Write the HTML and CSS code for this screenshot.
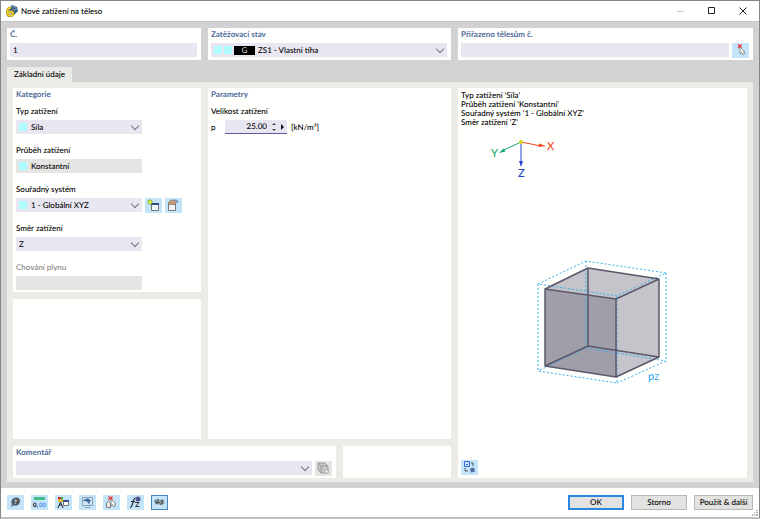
FILE: index.html
```html
<!DOCTYPE html>
<html lang="cs">
<head>
    <meta charset="UTF-8">
    <title>Nové zatížení na těleso</title>
    <link rel="stylesheet" href="styles.css">
</head>
<body>

<div class="window">
    <header class="titlebar">
        <svg class="app-icon" viewBox="0 0 12 12">
            <path d="M3 3 6 0 11 2 12 6 8 10 4 8z" fill="#3d5f86"/>
            <path d="M4 3 7 1 10 3M7 5 11 4" stroke="#7f9dbd" fill="none"/>
            <path d="M5 2.500C1.500 3 1 6 1.500 9C2.500 12 7 11 7 8.500C7 6 4 6 2 8" fill="none" stroke="#8d7a1e" stroke-width="2.600"/>
            <path d="M5 2.500C1.500 3 1 6 1.500 9C2.500 12 7 11 7 8.500C7 6 4 6 2 8" fill="none" stroke="#ecd02a" stroke-width="1.800"/>
        </svg>
        <h1>Nové zatížení na těleso</h1>
        <div class="window-buttons">
            <button aria-label="Minimalizovat" disabled><svg viewBox="0 0 8 8"><path d="M0 4.500H7" stroke="#ccc"/></svg></button>
            <button aria-label="Maximalizovat"><svg viewBox="0 0 8 8"><path d="M.5 .5H6.500V6.500H.5z" stroke="#222" fill="none"/></svg></button>
            <button aria-label="Zavřít"><svg viewBox="0 0 8 8"><path d="M.5 .5 7.500 7.500M7.500 .5 .5 7.500" stroke="#222"/></svg></button>
        </div>
    </header>

    <main>
        <div class="columns top">
            <section class="panel">
                <h2><label for="number">Č.</label></h2>
                <input type="text" id="number" class="field" value="1">
            </section>
            <section class="panel">
                <h2><label for="loadCase">Zatěžovací stav</label></h2>
                <div class="combo">
                    <span class="marks"><i class="swatch"></i><i class="swatch"></i><b class="badge">G</b></span>
                    <select id="loadCase" class="field with-badge"><option>ZS1 - Vlastní tíha</option></select>
                </div>
            </section>
            <section class="panel">
                <h2><label for="assigned">Přiřazeno tělesům č.</label></h2>
                <div class="line">
                    <input type="text" id="assigned" class="field">
                    <button class="tool" aria-label="Vybrat">
                        <svg viewBox="0 0 17 15"><path d="M6 1.500 9.500 5M9.500 1.500 6 5" stroke="#e33" stroke-width="1.300"/><path d="M8 4V11L9.500 9.500 11 12 12.500 11 11.500 9H13z" fill="#fff" stroke="#777" stroke-width=".8"/></svg>
                    </button>
                </div>
            </section>
        </div>

        <nav><button class="tab">Základní údaje</button></nav>

        <div class="columns page">
            <div class="left">
                <section class="panel category">
                    <h2>Kategorie</h2>
                    <label for="type">Typ zatížení</label>
                    <div class="combo short">
                        <span class="marks"><i class="swatch"></i></span>
                        <select id="type" class="field with-swatch"><option>Síla</option></select>
                    </div>
                    <label for="course">Průběh zatížení</label>
                    <div class="combo short">
                        <span class="marks"><i class="swatch"></i></span>
                        <input type="text" id="course" class="field with-swatch readonly" value="Konstantní" readonly>
                    </div>
                    <label for="system">Souřadný systém</label>
                    <div class="line system">
                        <div class="combo short">
                            <span class="marks"><i class="swatch"></i></span>
                            <select id="system" class="field with-swatch"><option>1 - Globální XYZ</option></select>
                        </div>
                        <button class="tool" aria-label="Nový souřadný systém">
                            <svg viewBox="0 0 17 15"><path d="M6.500 6.500H13.500V12.500H6.500z" fill="#eef5fb" stroke="#777"/><path d="M6 6H14" stroke="#334e7c" stroke-width="2"/><path d="M5 1V7M2 4H8M3 2 7 6M7 2 3 6" stroke="#8fae18"/><circle cx="5" cy="4" r="1.500" fill="#d5ef35"/></svg>
                        </button>
                        <button class="tool" aria-label="Upravit souřadný systém">
                            <svg viewBox="0 0 17 15"><path d="M3.500 5.500H10.500V12.500H3.500z" fill="#eef3f8" stroke="#777"/><path d="M3 5 6 2H10L12 4 9 7 7 6 5 7z" fill="#c59b7a" stroke="#7d6657" stroke-width=".6"/><path d="M10 2 13 4" stroke="#6b9bc9" stroke-width="2"/></svg>
                        </button>
                    </div>
                    <label for="direction">Směr zatížení</label>
                    <div class="combo short">
                        <select id="direction" class="field"><option>Z</option></select>
                    </div>
                    <label for="gas" class="muted">Chování plynu</label>
                    <div class="combo short">
                        <input type="text" id="gas" class="field readonly" disabled>
                    </div>
                </section>
                <section class="panel filler"></section>
            </div>

            <section class="panel params">
                <h2>Parametry</h2>
                <label for="magnitude">Velikost zatížení</label>
                <div class="line magnitude">
                    <span class="symbol">p</span>
                    <div class="spin">
                        <input type="text" id="magnitude" value="25.00">
                        <svg viewBox="0 0 20 12"><path d="M5 4 7 2 9 4zM5 8 7 10 9 8z" fill="#444"/><path d="M14 3 17 6 14 9z" fill="#111"/></svg>
                    </div>
                    <span>[kN/m³]</span>
                </div>
            </section>

            <section class="panel preview">
                <p>Typ zatížení 'Síla'<br>Průběh zatížení 'Konstantní'<br>Souřadný systém '1 - Globální XYZ'<br>Směr zatížení 'Z'</p>
                <svg class="scene" viewBox="0 0 200 260">
                    <g class="axes">
                        <path d="M34 14 54 18" stroke="#f04a1c"/>
                        <path d="M59 18 52 15.500 51.500 19z" fill="#f04a1c"/>
                        <path d="M34 14 17 22" stroke="#14a673"/>
                        <path d="M12 25 16.500 20.500 18.500 23.500z" fill="#14a673"/>
                        <path d="M34 14V34" stroke="#2444cc"/>
                        <path d="M34 39 32 33H36z" fill="#2444cc"/>
                        <circle cx="34" cy="14" r="2" fill="#ddd51a"/>
                        <text x="60" y="22" fill="#f04a1c">X</text>
                        <text x="4" y="29" fill="#14a673">Y</text>
                        <text x="31" y="49" fill="#2444cc">Z</text>
                    </g>
                    <path d="M58 161 101 140 172 151V229L129 249 58 238z" fill="#c5c4cb"/>
                    <path d="M58 161 129 171V249L58 238z" fill="#a09ea9"/>
                    <path class="load" d="M51 156 99 133 179 145 130 168zM51 156V243L130 255V168M179 145V233L130 255M99 133V220L51 243M99 220 179 233"/>
                    <path class="edge" d="M58 161 101 140 172 151 129 171zM58 161V238L129 249V171M172 151V229L129 249M101 140V218L58 238M101 218 172 229"/>
                    <text x="161" y="252" class="load-name">p<tspan class="sub">Z</tspan></text>
                </svg>
                <button class="tool" aria-label="Přepnout zobrazení">
                    <svg viewBox="0 0 17 15"><path d="M3.500 1.500H8.500V6.500H3.500z" fill="#cfe0ff" stroke="#3569dc"/><path d="M5 4.500H7" stroke="#3569dc"/><path d="M9 8.500 13 7.500 14 11.500 10 12.500z" fill="#496c9c"/><path d="M10 3H12V6M4 8V11H7" stroke="#555" fill="none"/></svg>
                </button>
            </section>

            <div class="comment-row">
                <section class="panel comment">
                    <h2><label for="comment">Komentář</label></h2>
                    <div class="line">
                        <div class="combo"><select id="comment" class="field"><option></option></select></div>
                        <button class="tool off" aria-label="Knihovna komentářů" disabled>
                            <svg viewBox="0 0 17 15"><path d="M3 2H10L13 5V12H6L3 9z" fill="#c7c7c7" stroke="#999"/><path d="M6 5H13M6 5V12M3 2 6 5" stroke="#999" fill="none"/><path d="M10 9H13V12H10z" fill="#eee" stroke="#999" stroke-width=".5"/></svg>
                        </button>
                    </div>
                </section>
                <section class="panel spare"></section>
            </div>
        </div>
    </main>

    <footer>
        <div class="tools">
            <button class="tool" aria-label="Nápověda"><svg viewBox="0 0 17 15"><path d="M4 12 5 9C3 6 6 2.500 9 2.500C13 2.500 14 6 12 9C10 11 8 11 7 10z" fill="#505963"/><text x="7" y="9" class="glyph light">?</text></svg></button>
            <button class="tool" aria-label="Jednotky"><svg viewBox="0 0 17 15"><path d="M3 2H14V5H3z" fill="#43bd83"/><text x="2" y="12" class="glyph">0,</text><text x="8" y="12" class="glyph blue">00</text></svg></button>
            <button class="tool" aria-label="Zobrazení"><svg viewBox="0 0 17 15"><path d="M3 2H6V4.500H3z" fill="#d93030"/><path d="M6 2H8V5H6z" fill="#3bb44a"/><path d="M3 4.500H8V7H3z" fill="#e0c322"/><path d="M5.500 7 3 13M5.500 7 8 13M4 10H7" stroke="#222"/><path d="M8.500 5.500H13.500V10.500H8.500z" fill="#fff" stroke="#777"/><path d="M8 6H14" stroke="#3b4f91" stroke-width="2"/></svg></button>
            <button class="tool" aria-label="Náhled"><svg viewBox="0 0 17 15"><path d="M3.500 2.500H13.500V10.500H3.500z" fill="#d5e7f3" stroke="#8d9fae"/><path d="M4 6C6 2.500 11 2.500 12 6L10.500 7V10L8 6.500z" fill="#3c6f9e"/><path d="M6 12.500H11" stroke="#8d9fae"/></svg></button>
            <button class="tool" aria-label="Výběr"><svg viewBox="0 0 17 15"><path d="M5.500 1.500 9.500 5M9.500 1.500 5.500 5" stroke="#e33" stroke-width="1.300"/><path d="M3.500 8 5.500 6.500 7.500 8V12.500H3.500z" fill="#eee" stroke="#777"/><path d="M8 4.500V11L9.500 9.500 11 12 12.500 11 11.500 9H13z" fill="#fff" stroke="#777" stroke-width=".8"/></svg></button>
            <button class="tool" aria-label="Vzorec"><svg viewBox="0 0 17 15"><path d="M3 12.500C6 13 5.500 3 8.500 3M4 6.500H8" stroke="#222" stroke-width="1.200" fill="none"/><circle cx="11" cy="4" r="2.500" fill="#51568d"/><path d="M8 7.500H12L8.500 11.500H12.500" stroke="#333" fill="none"/></svg></button>
            <button class="tool active" aria-label="Komentáře"><svg viewBox="0 0 17 15"><path d="M3 6 6 3.500 9 5 12 4 14 7 11 11 8 9 5 10z" fill="#98a4ae"/><path d="M4 5 6 9M7 4 7 9M10 5 12 9M9 10 12 5M4 7.500H9" stroke="#4d555e" fill="none"/></svg></button>
        </div>
        <div class="actions">
            <button class="action primary">OK</button>
            <button class="action">Storno</button>
            <button class="action wide">Použít &amp; další</button>
        </div>
        <svg class="grip" viewBox="0 0 6 6"><path d="M4 0H6V1H4zM2 2H3V3H2zM4 2H6V3H4zM0 4H1V6H0zM2 4H3V6H2zM4 4H6V6H4z" fill="#aaa"/></svg>
    </footer>
</div>

</body>
</html>
```
FILE: styles.css
```css
* {
    box-sizing: border-box;
}
body {
    margin: 0;
    font-family: Lato, "Noto Sans", sans-serif;
    font-size: 8px;
    line-height: 11px;
    font-weight: 500;
    color: #000;
    text-rendering: geometricPrecision;
}
h1, h2, p {
    margin: 0;
    font-size: 8px;
    font-weight: 500;
}
h2 {
    color: #4f6b9c;
    font-weight: 700;
}
button, input, select {
    font: inherit;
    color: inherit;
    text-rendering: inherit;
    border: 0;
    border-radius: 0;
    padding: 0;
    margin: 0;
}
svg {
    display: block;
}
.window {
    display: flex;
    flex-direction: column;
    min-height: 100vh;
    background: #d2d2d4;
    border: 1px solid #858585;
    border-bottom: 2px solid #c0c0c0;
}
.titlebar {
    display: flex;
    align-items: center;
    height: 21px;
    padding-left: 5px;
    background: #fffffd;
    border-bottom: 1px solid #c5c5c5;
}
.titlebar h1 {
    margin-left: 3px;
}
.app-icon {
    width: 12px;
    height: 12px;
}
.window-buttons {
    display: flex;
    gap: 23px;
    margin-left: auto;
    padding-right: 12px;
}
.window-buttons button {
    background: none;
}
.window-buttons svg {
    width: 8px;
    height: 8px;
}
main {
    flex: 1;
    display: flex;
    flex-direction: column;
    padding: 6px;
}
.columns {
    display: grid;
    gap: 7px;
}
.top {
    grid-template-columns: 194fr 243fr 295fr;
}
.panel {
    background: #fffffd;
    padding: 1px 4px 3px 3px;
}
.top h2, .comment h2 {
    margin-bottom: 3px;
}
.field {
    display: block;
    width: 100%;
    height: 14px;
    padding: 0 3px;
    background-color: #e8e6f1;
    line-height: 14px;
    appearance: none;
}
.line {
    display: flex;
    align-items: center;
    gap: 3px;
}
.combo {
    position: relative;
    flex: 1;
}
.short {
    flex: none;
    width: 126px;
}
.combo:has(select)::after {
    content: "";
    position: absolute;
    right: 4px;
    top: 3px;
    width: 5px;
    height: 5px;
    border: solid #777;
    border-width: 0 1px 1px 0;
    transform: rotate(45deg);
}
.marks {
    position: absolute;
    left: 3px;
    top: 3px;
    display: flex;
    gap: 2px;
}
.swatch {
    width: 8px;
    height: 8px;
    background: #aefcff;
}
.badge {
    width: 21px;
    height: 9px;
    background: #000;
    color: #ddd;
    font-weight: 400;
    line-height: 9px;
    text-align: center;
}
.with-swatch {
    padding-left: 15px;
}
.with-badge {
    padding-left: 47px;
}
.readonly {
    background: #e5e5e4;
}
.muted {
    color: #858585;
}
.tool {
    flex: none;
    width: 17px;
    height: 15px;
    background: #c4e4fa;
}
.tool svg {
    width: 17px;
    height: 15px;
}
.top .line, .system, .comment .line {
    height: 14px;
}
.off {
    background: #e5e5e4;
}
.active {
    outline: 1px solid #4584bd;
    outline-offset: -1px;
}
.tab {
    display: block;
    margin-top: 7px;
    min-width: 65px;
    height: 15px;
    padding: 0 6px;
    background: #ebece8;
}
.page {
    flex: 1;
    grid-template-columns: 188fr 243fr 289fr;
    grid-template-rows: 1fr auto;
    padding: 6px 6px 4px;
    background: #ebece8;
}
.left {
    display: flex;
    flex-direction: column;
    gap: 7px;
}
.category {
    padding-bottom: 2px;
}
.category label, .params > label {
    display: block;
    margin: 11px 0 3px;
}
.category h2 + label, .params > label {
    margin-top: 6px;
}
.filler {
    flex: 1;
}
.magnitude {
    gap: 4px;
}
.symbol {
    width: 10px;
}
.spin {
    display: flex;
    align-items: center;
    width: 62px;
    height: 14px;
    background: #e8e6f1;
    border-bottom: 1px solid #6657a5;
}
.spin input {
    flex: 1;
    min-width: 0;
    background: none;
    text-align: right;
}
.spin svg {
    width: 20px;
    height: 12px;
}
.preview {
    grid-column: 3;
    grid-row: 1 / 3;
    display: flex;
    flex-direction: column;
    align-items: flex-start;
}
.preview p {
    margin-top: 2px;
    line-height: 9px;
}
.scene {
    width: 200px;
    height: 260px;
    margin: 1px 0 0 26px;
}
.preview .tool {
    margin-top: auto;
}
.axes {
    font-size: 11px;
    fill: none;
}
.edge {
    fill: none;
    stroke: #5b566a;
    stroke-width: 1.500;
    stroke-linejoin: round;
}
.load {
    fill: none;
    stroke: #38b0ee;
    stroke-dasharray: 2 2;
}
.load-name {
    fill: #2eaaf0;
    font-size: 11px;
}
.sub {
    font-size: 8px;
}
.comment-row {
    grid-column: 1 / 3;
    display: grid;
    grid-template-columns: 323fr 108fr;
    gap: 7px;
}
footer {
    position: relative;
    display: flex;
    align-items: center;
    justify-content: space-between;
    height: 29px;
    padding: 0 6px;
    background: #fffffd;
}
.tools, .actions {
    display: flex;
    gap: 7px;
}
.action {
    width: 56px;
    height: 15px;
    background: #e2e2e0;
    border: 1px solid #b8b8b8;
}
.wide {
    width: 59px;
}
.primary {
    border-color: #2b86e2;
    box-shadow: inset 0 0 0 1px #2b86e2;
}
.grip {
    position: absolute;
    right: 1px;
    bottom: 1px;
    width: 6px;
    height: 6px;
}
.glyph {
    font-size: 6px;
    font-weight: 700;
}
.light {
    fill: #fff;
}
.blue {
    fill: #4c8be8;
}
```
